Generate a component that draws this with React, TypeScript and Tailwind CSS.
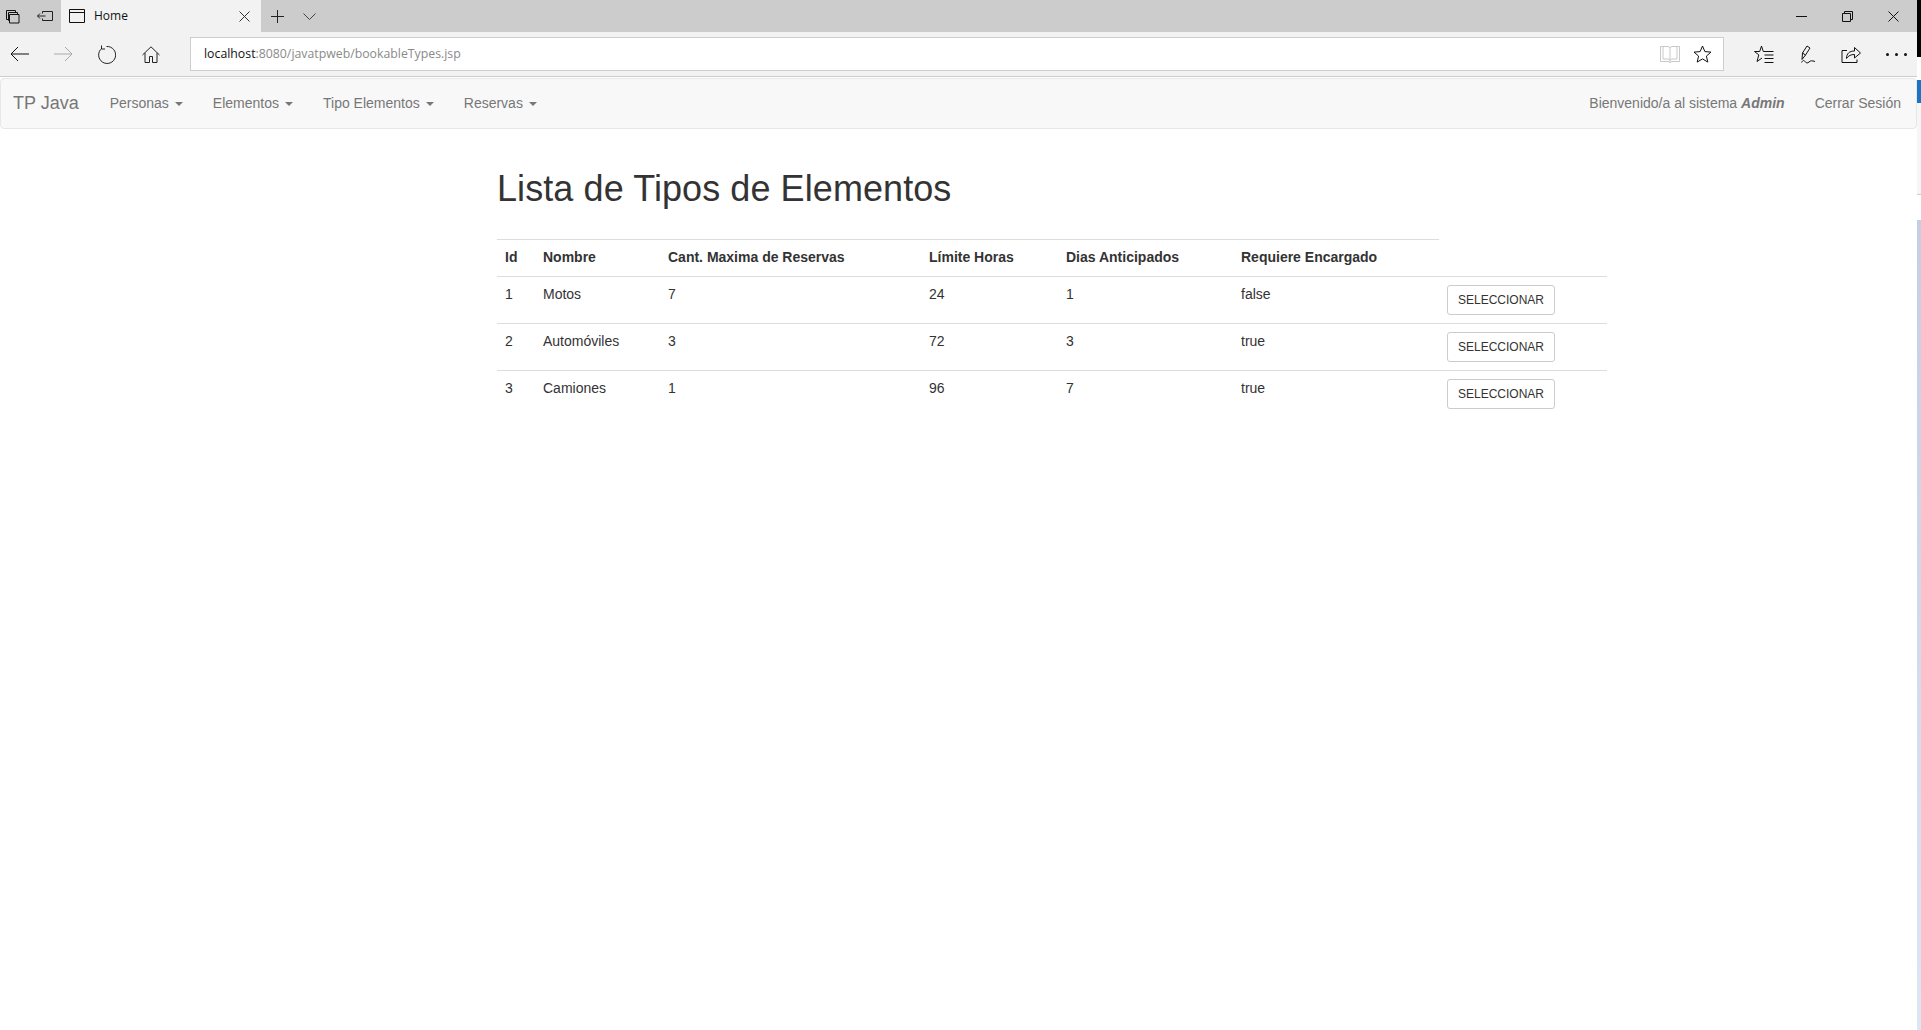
const font = "font-['Liberation_Sans',Arial,sans-serif]";

const rows = [
  { id: 1, name: "Motos", max: 7, hours: 24, days: 1, req: "false" },
  { id: 2, name: "Automóviles", max: 3, hours: 72, days: 3, req: "true" },
  { id: 3, name: "Camiones", max: 1, hours: 96, days: 7, req: "true" },
];

const headers = ["Id", "Nombre", "Cant. Maxima de Reservas", "Límite Horas", "Dias Anticipados", "Requiere Encargado"];
const menus = ["Personas", "Elementos", "Tipo Elementos", "Reservas"];

function Ico({ w = 20, h = 20, box, stroke = "#111", children }: { w?: number; h?: number; box: string; stroke?: string; children: React.ReactNode }) {
  return (
    <svg width={w} height={h} viewBox={box} fill="none" stroke={stroke} strokeWidth="1" className="block shrink-0">
      {children}
    </svg>
  );
}

function TabBar() {
  return (
    <div className="flex h-8 items-center bg-[#cccccc]">
      <div className="flex h-8 w-[61px] items-center pl-[5px] gap-[17px]">
        <Ico w={15} h={15} box="0 0 15 15">
          <path d="M1.500 1.500h9v2M1.500 1.500v9h2M3.500 3.500h9v2M3.500 3.500v8h1M4.500 5.500h9.500v8.500h-9.500z" />
        </Ico>
        <Ico w={16} h={12} box="0 0 16 12" stroke="#222">
          <path d="M5.500 1.500h10v9h-10M5.500 1.500v2M5.500 8.500v2M0.500 6h8M3 3.500L.5 6 3 8.500" />
        </Ico>
      </div>
      <div className={`flex h-8 w-[200px] items-center bg-[#f2f2f2] pl-[8px] pr-[11px] ${font}`}>
        <Ico w={16} h={14} box="0 0 16 14">
          <path d="M.5.5h15v13H.5zM.5 3.500h15" />
        </Ico>
        <span className="ml-[9px] flex-1 font-['Open_Sans',sans-serif] text-[12px] text-[#111]">Home</span>
        <Ico w={11} h={11} box="0 0 11 11" stroke="#333">
          <path d="M.5.5l10 10M10.500.5l-10 10" />
        </Ico>
      </div>
      <div className="ml-[10px]">
        <Ico w={13} h={13} box="0 0 13 13" stroke="#222">
          <path d="M0 6.500h13M6.500 0v13" />
        </Ico>
      </div>
      <div className="ml-[19px]">
        <Ico w={13} h={7} box="0 0 13 7" stroke="#444">
          <path d="M.5.5l6 6 6-6" />
        </Ico>
      </div>
      <div className="ml-auto flex items-center gap-[35px] pr-[18px]">
        <div className="h-px w-[11px] bg-[#111]" />
        <Ico w={11} h={11} box="0 0 11 11" stroke="#111">
          <path d="M.5 2.500h8v8h-8zM2.500 2.500v-2h8v8h-2" />
        </Ico>
        <Ico w={11} h={11} box="0 0 11 11" stroke="#111">
          <path d="M.5.5l10 10M10.500.5l-10 10" />
        </Ico>
      </div>
    </div>
  );
}

function ToolBar() {
  return (
    <div className="flex h-[45px] items-center border-b border-b-[#cccccc] bg-[#f2f2f2]">
      <div className="flex items-center pl-[10px]">
        <Ico w={19} h={16} box="0 0 19 16">
          <path d="M19 8H1M8 1L1 8l7 7" />
        </Ico>
        <div className="ml-[25px]">
          <Ico w={19} h={16} box="0 0 19 16" stroke="#aaaaaa">
            <path d="M0 8h18M11 1l7 7-7 7" />
          </Ico>
        </div>
        <div className="ml-[24px]">
          <Ico w={19} h={19} box="0 0 19 19" stroke="#222">
            <path d="M5 3.200A8.500 8.500 0 1 0 9.500 1.500M4.500 .5v3.500h3.500" />
          </Ico>
        </div>
        <div className="ml-[26px]">
          <Ico w={18} h={17} box="0 0 18 17" stroke="#222">
            <path d="M.5 9L9 .8 17.500 9M3 7v9.500h4.500v-6h3v6H15V7" />
          </Ico>
        </div>
      </div>
      <div className="ml-[30px] flex h-[34px] w-[1534px] items-center border border-[#cdcdcd] bg-white pl-[13px] pr-[11px] font-['Open_Sans',sans-serif] text-[12.3px]">
        <span className="text-[#111]">localhost</span>
        <span className="text-[#8a8a8a]">:8080/javatpweb/bookableTypes.jsp</span>
        <div className="ml-auto flex items-center gap-[13px]">
          <Ico w={20} h={17} box="0 0 20 17" stroke="#c8c8c8">
            <path d="M.5.5h7.500l2 1 2-1h7.500v15h-7.500l-2 1-2-1H.5zM10 1.500v15M3 .5v12.500h5l2 1 2-1h5V.5" />
          </Ico>
          <Ico w={19} h={18} box="0 0 19 18">
            <path d="M9.500 1l2.400 5.600 6.100.5-4.600 4 1.400 6-5.300-3.200-5.300 3.200 1.400-6-4.600-4 6.100-.5z" />
          </Ico>
        </div>
      </div>
      <div className="ml-[30px] flex items-center">
        <Ico w={20} h={19} box="0 0 20 19">
          <path d="M7.500 1L9.300 6.500H19.500M7.500 1L5.700 6.500H.5l4.300 3.400L3 16.500l5-3.500M10.500 10h9M10.500 13.500h9M10.500 17.500h9" />
        </Ico>
        <div className="ml-[26px]">
          <Ico w={18} h={19} box="0 0 18 19">
            <path d="M2 14.500L2.500 8 7 1l3 2-4.500 7zM2.500 8l3 2M1.500 17.500c1.500-2.500 2.500-2.500 3.500-1s2.500 2 4 .5 3-1.500 6-.5" />
          </Ico>
        </div>
        <div className="ml-[23px]">
          <Ico w={20} h={18} box="0 0 20 18">
            <path d="M1 5.500v12h15v-3M1 5.500h5M5.500 13.500c0-5 3-7.500 8-7.500V2.500l6 5.500-6 5V9.500c-3.500 0-6 1-8 4z" />
          </Ico>
        </div>
        <div className="ml-[25px] flex gap-[6px]">
          <div className="h-[3px] w-[3px] rounded-full bg-[#111]" />
          <div className="h-[3px] w-[3px] rounded-full bg-[#111]" />
          <div className="h-[3px] w-[3px] rounded-full bg-[#111]" />
        </div>
      </div>
    </div>
  );
}

function NavBar() {
  return (
    <nav className={`mt-px flex h-[51px] items-center rounded-[4px] border border-[#e7e7e7] bg-[#f8f8f8] text-[14px] text-[#777777] ${font}`}>
      <span className="ml-[12px] text-[18px]">TP Java</span>
      <div className="ml-[31px] flex gap-[30px]">
        {menus.map((m) => (
          <span key={m} className="flex items-center">
            {m}
            <span className="ml-[6px] mt-px h-0 w-0 border-x-[4px] border-t-[4px] border-x-transparent border-t-[#777777]" />
          </span>
        ))}
      </div>
      <div className="ml-auto flex gap-[30px] pr-[15px]">
        <span>
          Bienvenido/a al sistema <b className="italic">Admin</b>
        </span>
        <span>Cerrar Sesión</span>
      </div>
    </nav>
  );
}

function TypesTable() {
  return (
    <table className={`w-[1110px] table-fixed border-collapse text-[14px] text-[#333333] ${font}`}>
      <colgroup>
        <col className="w-[38px]" />
        <col className="w-[125px]" />
        <col className="w-[261px]" />
        <col className="w-[137px]" />
        <col className="w-[175px]" />
        <col className="w-[206px]" />
        <col className="w-[168px]" />
      </colgroup>
      <thead>
        <tr>
          {headers.map((h) => (
            <th key={h} className="border-y border-[#dddddd] px-2 pt-[7px] pb-[9px] text-left align-top font-bold leading-5">
              {h}
            </th>
          ))}
          <th className="border-b border-[#dddddd] p-2" />
        </tr>
      </thead>
      <tbody>
        {rows.map((r) => (
          <tr key={r.id} className="border-b border-[#dddddd] last:border-b-0">
            <td className="px-2 pt-[7px] pb-2 align-top leading-5">{r.id}</td>
            <td className="px-2 pt-[7px] pb-2 align-top leading-5">{r.name}</td>
            <td className="px-2 pt-[7px] pb-2 align-top leading-5">{r.max}</td>
            <td className="px-2 pt-[7px] pb-2 align-top leading-5">{r.hours}</td>
            <td className="px-2 pt-[7px] pb-2 align-top leading-5">{r.days}</td>
            <td className="px-2 pt-[7px] pb-2 align-top leading-5">{r.req}</td>
            <td className="p-2 align-top leading-5">
              <button className="block h-[30px] w-[108px] rounded-[3px] border border-[#cccccc] bg-white text-[12px] text-[#333333]">
                SELECCIONAR
              </button>
            </td>
          </tr>
        ))}
      </tbody>
    </table>
  );
}

export default function App() {
  return (
    <div className="flex h-[1030px] overflow-hidden bg-white">
      <div className="w-[1917px]">
        <TabBar />
        <ToolBar />
        <NavBar />
        <main className="ml-[497px]">
          <h1 className={`mt-[40px] text-[36px] font-normal leading-[40px] tracking-[0.08px] text-[#333333] ${font}`}>Lista de Tipos de Elementos</h1>
          <div className="mt-[30px]">
            <TypesTable />
          </div>
        </main>
      </div>
      <div className="flex w-[4px] flex-col">
        <div className="h-[57px] bg-black" />
        <div className="h-[23px] bg-white" />
        <div className="h-[23px] bg-[#1b74c4]" />
        <div className="h-[92px] border-b border-b-[#cccccc] bg-[#f5f6f8]" />
        <div className="h-[25px] bg-white" />
        <div className="flex-1 bg-linear-to-b from-[#c5cfe2] to-[#dde6f3]" />
      </div>
    </div>
  );
}
